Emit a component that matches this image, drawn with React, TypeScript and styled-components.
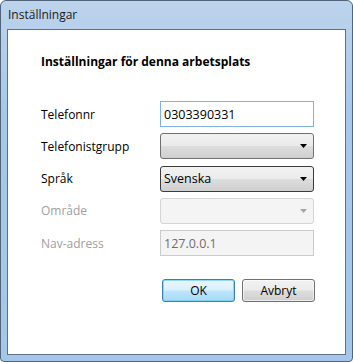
import styled, { createGlobalStyle } from "styled-components";

const GlobalStyle = createGlobalStyle`
  html, body {
    margin: 0;
    padding: 0;
    background: #ffffff;
  }
  body {
    font-family: "Open Sans", "Noto Sans", sans-serif;
    font-size: 12px;
  }
`;

const Window = styled.div`
  width: 353px;
  height: 362px;
  box-sizing: border-box;
  border: 1px solid #50647a;
  border-radius: 6px 6px 4px 4px;
  background: linear-gradient(to bottom, #bcd3ec 0%, #a9c8e8 30%, #a6c6e7 100%);
  display: flex;
  flex-direction: column;
  padding: 0 6px 6px;
  overflow: hidden;
`;

const TitleBar = styled.div`
  height: 28px;
  display: flex;
  align-items: center;
  padding-left: 1px;
  padding-bottom: 1px;
  box-sizing: border-box;
  color: #1a1a1a;
  font-size: 12px;
`;

const Client = styled.div`
  flex: 1;
  background: #ffffff;
  border: 1px solid #5b7089;
  padding: 24px 30px 0 33px;
  display: flex;
  flex-direction: column;
`;

const Heading = styled.div`
  font-weight: 700;
  color: #000;
  line-height: 16px;
  margin-bottom: 31px;
`;

const Form = styled.div`
  display: grid;
  grid-template-columns: 119px 154px;
  grid-auto-rows: 26px;
  row-gap: 6.25px;
  align-items: center;
`;

const Label = styled.label<{ $disabled?: boolean }>`
  color: ${(p) => (p.$disabled ? "#a0a0a0" : "#000")};
`;

const TextBox = styled.div<{ $disabled?: boolean; $focused?: boolean }>`
  height: 26px;
  box-sizing: border-box;
  border: 1px solid
    ${(p) => (p.$focused ? "#7fb4e2" : p.$disabled ? "#c9cbcd" : "#abadb3")};
  background: ${(p) => (p.$disabled ? "#f4f4f4" : "#fff")};
  color: ${(p) => (p.$disabled ? "#6d6d6d" : "#000")};
  display: flex;
  align-items: center;
  padding-left: 3px;
  font-size: 12.5px;
`;

const Select = styled.div<{ $disabled?: boolean; $active?: boolean }>`
  height: 26px;
  box-sizing: border-box;
  border-radius: 3px;
  border: 1px solid
    ${(p) => (p.$disabled ? "#d5d5d5" : p.$active ? "#3c3c3c" : "#707070")};
  background: ${(p) =>
    p.$disabled
      ? "#f4f4f4"
      : "linear-gradient(to bottom, #f2f2f2 0%, #ebebeb 48%, #dddddd 52%, #cfcfcf 100%)"};
  display: flex;
  align-items: center;
  justify-content: space-between;
  padding: 0 6px 0 3px;
  color: #000;
  font-size: 12.5px;
`;

const Arrow = styled.svg<{ $disabled?: boolean }>`
  width: 7px;
  height: 4px;
  fill: ${(p) => (p.$disabled ? "#a6a6a6" : "#000")};
`;

const Buttons = styled.div`
  display: flex;
  justify-content: flex-end;
  gap: 7px;
  margin-top: 23px;
  padding-right: 0;
`;

const Button = styled.div<{ $default?: boolean }>`
  width: 73px;
  height: 23px;
  box-sizing: border-box;
  border-radius: 3px;
  border: 1px solid ${(p) => (p.$default ? "#3c7fb1" : "#707070")};
  background: ${(p) =>
    p.$default
      ? "linear-gradient(to bottom, #eaf6fd 0%, #d9f0fc 48%, #bee6fd 52%, #a7d9f5 100%)"
      : "linear-gradient(to bottom, #f2f2f2 0%, #ebebeb 48%, #dddddd 52%, #cfcfcf 100%)"};
  box-shadow: inset 0 0 0 1px
    ${(p) => (p.$default ? "rgba(120, 210, 245, 0.8)" : "rgba(255,255,255,0.6)")};
  display: flex;
  align-items: center;
  justify-content: center;
  color: #000;
`;

const DropArrow = ({ disabled }: { disabled?: boolean }) => (
  <Arrow $disabled={disabled} viewBox="0 0 7 4">
    <path d="M0 0H7L3.5 4Z" />
  </Arrow>
);

export default function App() {
  return (
    <>
      <GlobalStyle />
      <Window>
        <TitleBar>Inställningar</TitleBar>
        <Client>
          <Heading>Inställningar för denna arbetsplats</Heading>
          <Form>
            <Label>Telefonnr</Label>
            <TextBox $focused>0303390331</TextBox>
            <Label>Telefonistgrupp</Label>
            <Select>
              <span />
              <DropArrow />
            </Select>
            <Label>Språk</Label>
            <Select $active>
              <span>Svenska</span>
              <DropArrow />
            </Select>
            <Label $disabled>Område</Label>
            <Select $disabled>
              <span />
              <DropArrow disabled />
            </Select>
            <Label $disabled>Nav-adress</Label>
            <TextBox $disabled>127.0.0.1</TextBox>
          </Form>
          <Buttons>
            <Button $default>OK</Button>
            <Button>Avbryt</Button>
          </Buttons>
        </Client>
      </Window>
    </>
  );
}
